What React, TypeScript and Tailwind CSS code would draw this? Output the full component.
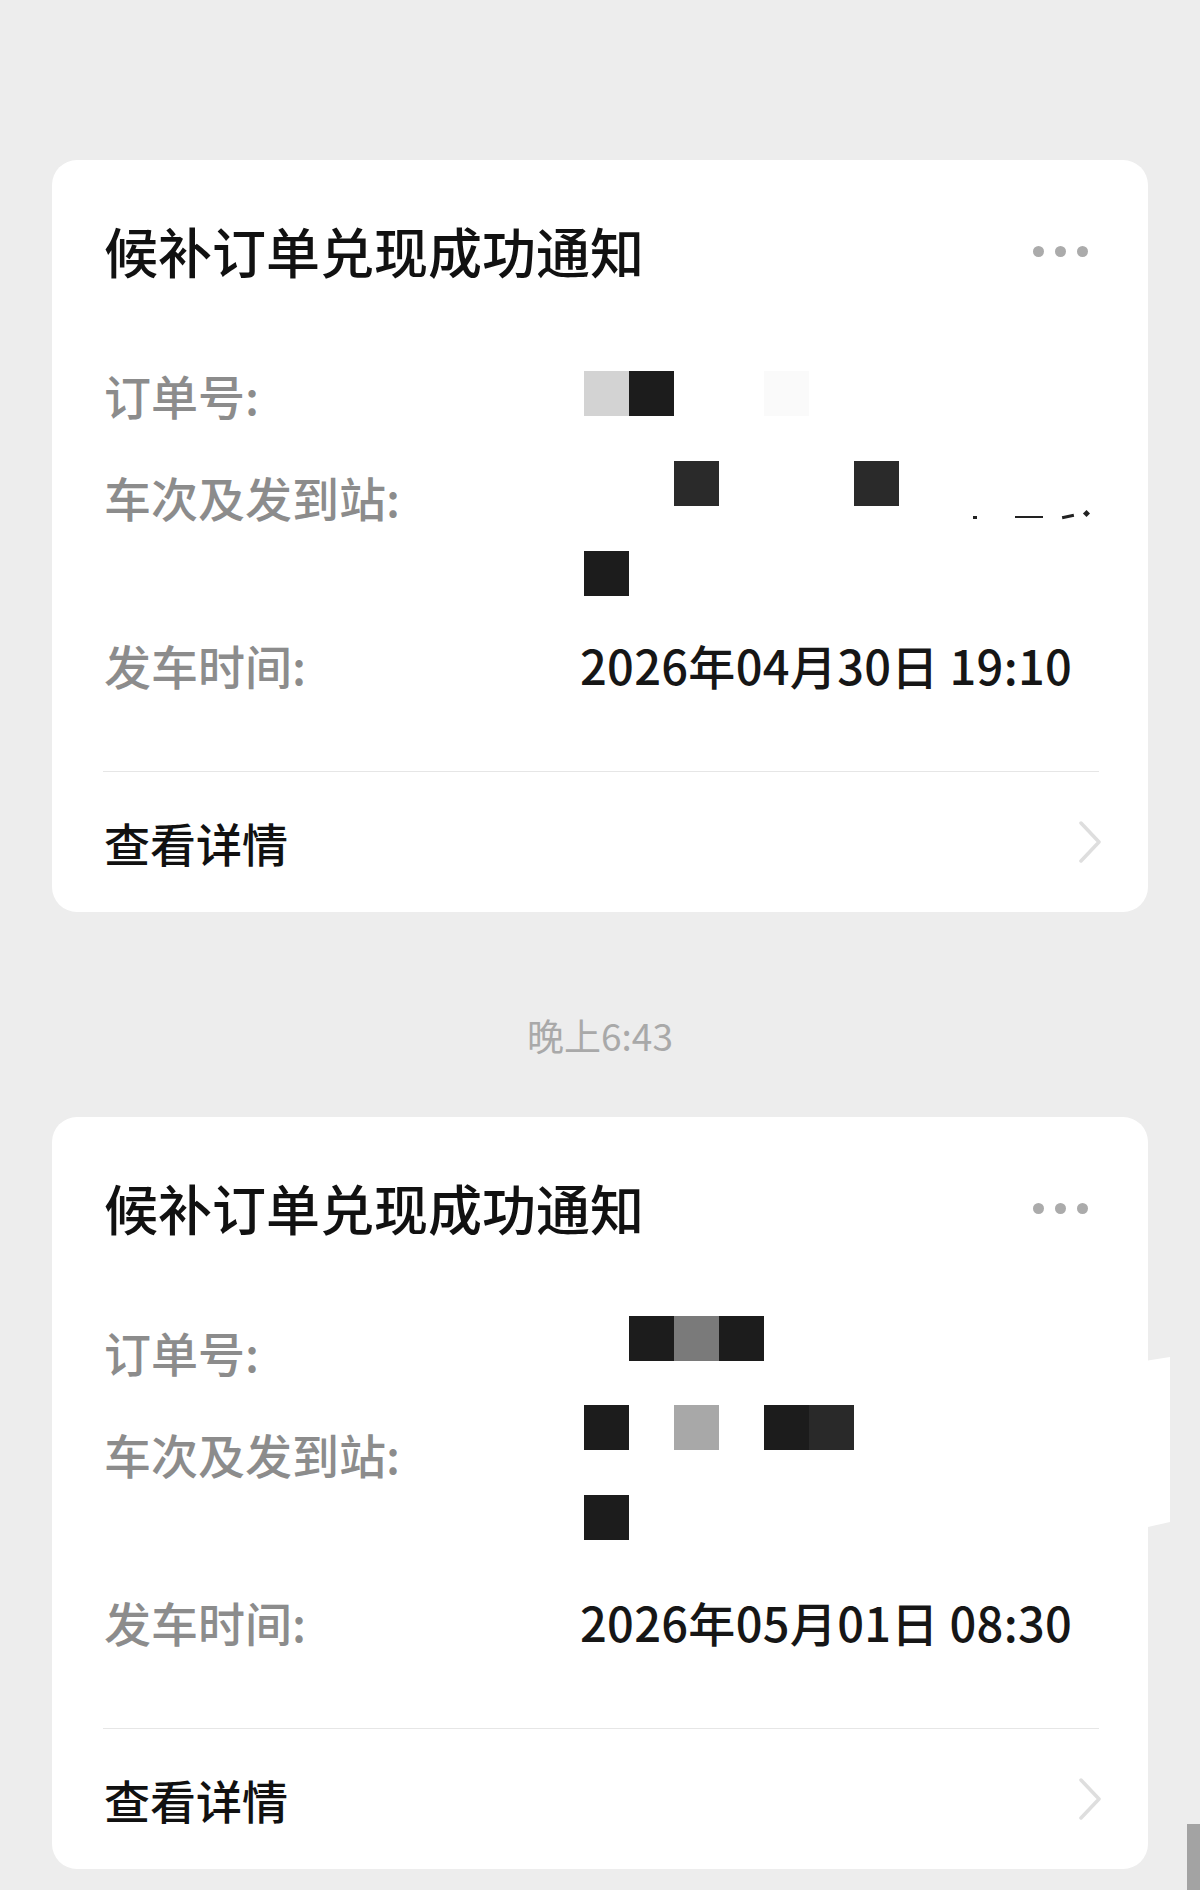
import React from 'react';

type Block = { col: number; top: number; color: string };

type Notice = {
  orderBlocks: Block[];
  trainBlocks: Block[];
  departure: string;
  marks?: boolean;
  notch?: boolean;
};

const notices: Notice[] = [
  {
    orderBlocks: [
      { col: 0, top: 9, color: '#d3d3d3' },
      { col: 1, top: 9, color: '#1c1c1c' },
      { col: 4, top: 9, color: '#fafafa' },
    ],
    trainBlocks: [
      { col: 2, top: -3, color: '#2a2a2a' },
      { col: 6, top: -3, color: '#2a2a2a' },
      { col: 0, top: 87, color: '#1c1c1c' },
    ],
    departure: '2026年04月30日 19:10',
    marks: true,
  },
  {
    orderBlocks: [
      { col: 1, top: -3, color: '#1c1c1c' },
      { col: 2, top: -3, color: '#7a7a7a' },
      { col: 3, top: -3, color: '#1c1c1c' },
    ],
    trainBlocks: [
      { col: 0, top: -16, color: '#1c1c1c' },
      { col: 2, top: -16, color: '#a8a8a8' },
      { col: 4, top: -16, color: '#1c1c1c' },
      { col: 5, top: -16, color: '#292929' },
      { col: 0, top: 74, color: '#1c1c1c' },
    ],
    departure: '2026年05月01日 08:30',
    notch: true,
  },
];

// pixelated redaction squares over the hidden text
const Mosaic = ({ blocks }: { blocks: Block[] }) => (
  <>
    {blocks.map((b, i) => (
      <span
        key={i}
        className="absolute h-[45px] w-[45px]"
        style={{ left: b.col * 45, top: b.top, backgroundColor: b.color }}
      />
    ))}
  </>
);

const Row = ({ label, children, tall }: { label: string; children: React.ReactNode; tall?: boolean }) => (
  <div className="flex">
    <div className="w-[480px] shrink-0 text-[47px] leading-[66px] font-medium text-[#8c8c8c]">{label}</div>
    <div className={`relative flex-1 text-[47px] leading-[66px] font-medium text-[#161616] ${tall ? 'h-[132px]' : 'h-[66px]'}`}>
      {children}
    </div>
  </div>
);

const Card = ({ n }: { n: Notice }) => (
  <div className="relative rounded-[25px] bg-white pl-[51px] pr-[49px] pt-[59px]">
    <div className="flex h-[64px] items-center justify-between pl-[1px]">
      <h2 className="text-[54px] leading-[64px] font-medium text-[#111]">候补订单兑现成功通知</h2>
      <div className="mr-[11px] flex items-center gap-[11px]">
        <span className="h-[11px] w-[11px] rounded-full bg-[#ababab]" />
        <span className="h-[11px] w-[11px] rounded-full bg-[#ababab]" />
        <span className="h-[11px] w-[11px] rounded-full bg-[#ababab]" />
      </div>
    </div>

    <div className="mt-[79px] flex flex-col gap-[36px] pl-[1px]">
      <Row label="订单号:">
        <Mosaic blocks={n.orderBlocks} />
      </Row>
      <Row label="车次及发到站:" tall>
        <Mosaic blocks={n.trainBlocks} />
        {n.marks && (
          <>
            <span className="absolute left-[389px] top-[52px] h-[3px] w-[4px] bg-[#222]" />
            <span className="absolute left-[431px] top-[52px] h-[2px] w-[28px] bg-[#222]" />
            <span className="absolute left-[478px] top-[51px] h-[3px] w-[12px] -rotate-12 bg-[#222]" />
            <span className="absolute left-[500px] top-[47px] h-[5px] w-[5px] rotate-45 bg-[#222]" />
          </>
        )}
      </Row>
      <Row label="发车时间:">
        <span className="-ml-[4px] tracking-[0.3px]">{n.departure}</span>
      </Row>
    </div>

    <div className="mt-[73px] h-px bg-[#e6e6e6]" />

    <div className="flex h-[140px] items-center justify-between pl-[1px]">
      <span className="text-[46px] font-medium text-[#111]">查看详情</span>
      <svg width="25" height="42" viewBox="0 0 25 42" className="-mr-[4px]" fill="none">
        <path d="M3 2 L21 21 L3 40" stroke="#dedede" strokeWidth="3.5" strokeLinecap="round" strokeLinejoin="round" />
      </svg>
    </div>

    {n.notch && (
      <div
        className="absolute -right-[22px] top-[240px] h-[170px] w-[22px] bg-white"
        style={{ clipPath: 'polygon(0 2%, 100% 0, 100% 97%, 0 100%)' }}
      />
    )}
  </div>
);

export default function App() {
  return (
    <div
      className="relative min-h-[1890px] overflow-hidden bg-[#ededed] px-[52px] pt-[160px]"
      style={{ fontFamily: '"Noto Sans CJK SC", "Noto Sans", sans-serif' }}
    >
      <Card n={notices[0]} />
      <div className="mt-[103px] mb-[62px] text-center text-[37px] leading-[40px] text-[#a9a9a9]">晚上6:43</div>
      <Card n={notices[1]} />
      <div className="absolute bottom-0 right-0 h-[66px] w-[13px] bg-[#a3a3a3]" />
    </div>
  );
}
